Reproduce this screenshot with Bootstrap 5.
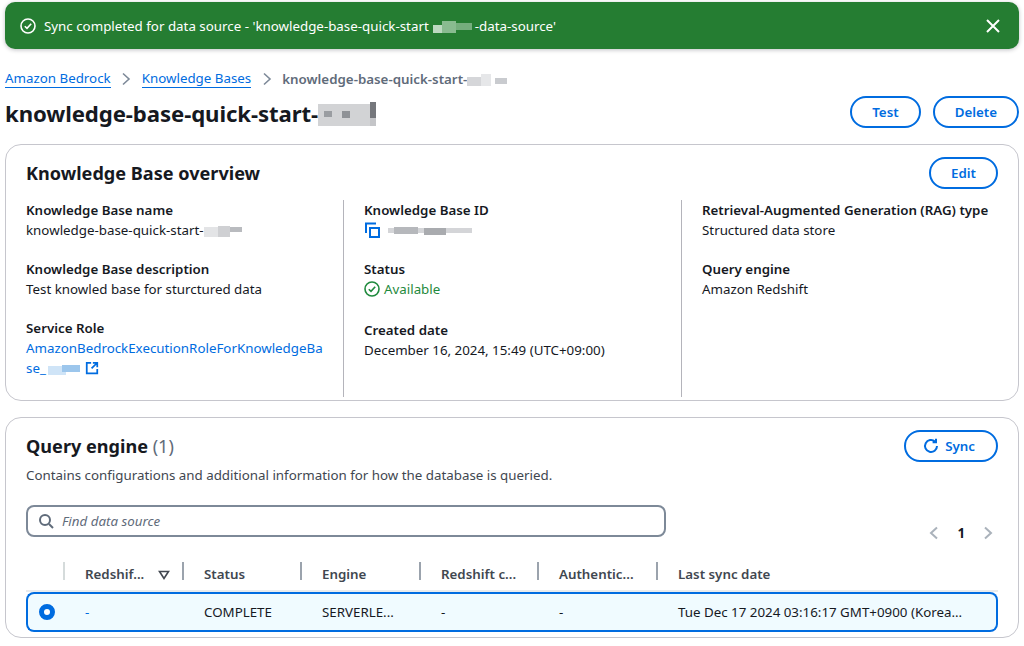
<!DOCTYPE html>
<html lang="en"><head><meta charset="utf-8"><title>Knowledge Base</title>
<link href="https://cdn.jsdelivr.net/npm/bootstrap@5.3.0/dist/css/bootstrap.min.css" rel="stylesheet">
<style>
html,body{height:646px;overflow:hidden}
body{font-family:"Noto Sans","Open Sans",sans-serif;font-size:13.33px;line-height:20px;color:#16191f;background:#fff}
.pg{padding:2px 5px 0}
.flash{height:47px;background:#257d32;color:#fff;border-radius:10px;padding:0 18px 0 15px;box-shadow:0 1px 4px rgba(0,7,22,.25);margin-bottom:20px}
.crumbs{height:20px;margin-bottom:4px}
.crumbs a,.lnk{color:#006ce0;text-decoration:none}
.crumbs a{border-bottom:1px solid #006ce0;line-height:17px;display:inline-block}
.crumb-sep{margin:0 10.5px}
.crumb-now{color:#5f6b7a;font-weight:600}
.titlebar{height:38px;margin-bottom:13px}
.ttl{font-size:22.2px;line-height:28px;font-weight:700;margin:0;padding-top:4px;letter-spacing:-.1px}
.pill{border:2px solid #006ce0;color:#006ce0;background:#fff;border-radius:16px;height:32px;font-size:13.33px;line-height:20px;font-weight:600;padding:0 20px;display:inline-flex;align-items:center;gap:6px}
.pill-ic{padding:0 21px 0 17px}
.panel{border:1px solid #c6c6cd;border-radius:16px;background:#fff;padding:12px 20px 0;position:relative}
.p1{height:257px;margin-bottom:16px}
.p2{height:221px}
.ph{font-size:18.1px;line-height:26px;font-weight:700;margin:3px 0 0}
.ph span{font-weight:400;color:#5f6b7a}
.ovg{display:grid;grid-template-columns:317px 338px 1fr;margin-top:11px;height:180px}
.ovc{padding-left:20px}
.ovc:first-child{padding-left:0;padding-right:16px}
.ovc+.ovc{border-left:1px solid #b4b4bb}
.fld{margin-bottom:19px}
.fld-tall{margin-bottom:21px}
.fl{font-weight:600;display:block}
.icv{min-height:20px}
.ok{color:#1f8a3d}
.desc{color:#414750;margin:3px 0 0}
.srchrow{margin-top:20px}
.srch{width:640px;height:32px;border:2px solid #7d8998;border-radius:8px;padding:0 10px;color:#5f6b7a;font-style:italic;gap:8px}
.pgr{color:#16191f;font-weight:700;gap:18px;padding-right:5px;margin-top:18px}
.tb{table-layout:fixed;width:972px;border-collapse:separate;border-spacing:0;margin:8px 0 0}
.tb th{font-weight:600;color:#414750;height:41px;padding:6px 0 0 21px;border:0;border-bottom:2px solid #e9ebed;position:relative;white-space:nowrap}
.tb th+th::before{content:"";position:absolute;left:-1px;top:11px;height:18px;width:2px;background:#9ba3ad}
.tb th:nth-child(2)::before{background:#d5dbdb}
.tb td{height:40px;padding:0 0 0 21px;background:#f0fbff;border:0;border-top:2px solid #006ce0;border-bottom:2px solid #006ce0;color:#16191f;white-space:nowrap;overflow:hidden;vertical-align:middle;--bs-table-bg:#f0fbff}
.tb td.lnk{color:#006ce0}
.tb td:first-child{border-left:2px solid #006ce0;border-radius:8px 0 0 8px;padding-left:11px}
.tb td:last-child{border-right:2px solid #006ce0;border-radius:0 8px 8px 0}
.rdo{display:block;width:16px;height:16px;border-radius:50%;border:5px solid #006ce0;background:#fff}
.mos{display:inline-block;vertical-align:-2px}
svg{flex:none}
</style></head>
<body>
<svg width="0" height="0" style="position:absolute"><filter id="bl"><feGaussianBlur stdDeviation=".7"/></filter></svg>
<div class="pg">
 <div class="flash d-flex align-items-center">
  <svg width="16" height="16" viewBox="0 0 16 16" fill="none" stroke="#fff" stroke-width="1.6" class="me-2"><circle cx="8" cy="8" r="7"/><path d="M4.8 8.2 7 10.4l4.2-4.6"/></svg>
  <span class="flex-grow-1">Sync completed for data source - 'knowledge-base-quick-start<svg class="mos" width="46" height="13"><g filter="url(#bl)"><rect x="4" y="5" width="9" height="8" fill="#bcd9c0"/><rect x="13" y="1" width="14" height="12" fill="#89bb90"/><rect x="27" y="3" width="16" height="7" fill="#75ae7d"/></g></svg>-data-source'</span>
  <svg width="16" height="16" viewBox="0 0 16 16" stroke="#fff" stroke-width="2" fill="none"><path d="M2 2l12 12M14 2 2 14"/></svg>
 </div>
 <div class="crumbs d-flex align-items-center">
  <a href="#">Amazon Bedrock</a>
  <svg class="crumb-sep" width="10" height="14" viewBox="0 0 10 14" fill="none" stroke="#7d8998" stroke-width="1.6"><path d="M2 1.5 8 7l-6 5.5"/></svg>
  <a href="#">Knowledge Bases</a>
  <svg class="crumb-sep" width="10" height="14" viewBox="0 0 10 14" fill="none" stroke="#7d8998" stroke-width="1.6"><path d="M2 1.5 8 7l-6 5.5"/></svg>
  <span class="crumb-now">knowledge-base-quick-start-<svg class="mos" width="42" height="12"><g filter="url(#bl)"><rect x="0" y="3" width="14" height="9" fill="#d5d6d9"/><rect x="14" y="0" width="10" height="12" fill="#e6e7e9"/><rect x="28" y="4" width="12" height="6" fill="#c9cbcf"/></g></svg></span>
 </div>
 <div class="titlebar d-flex align-items-center justify-content-between">
  <h1 class="ttl">knowledge-base-quick-start-<svg class="mos" width="60" height="24" style="vertical-align:-4px"><g filter="url(#bl)"><rect x="0" y="2" width="54" height="22" fill="#d2d3d5"/><rect x="6" y="9" width="8" height="6" fill="#9a9da1"/><rect x="24" y="9" width="8" height="7" fill="#8f9296"/><rect x="52" y="0" width="6" height="16" fill="#74777c"/><rect x="52" y="16" width="6" height="8" fill="#c4c5c8"/></g></svg></h1>
  <div class="d-flex gap-2 align-items-center"><button class="pill" type="button">Test</button><button class="pill ms-1" type="button">Delete</button></div>
 </div>
 <section class="panel p1">
  <div class="d-flex justify-content-between align-items-start">
   <h2 class="ph">Knowledge Base overview</h2>
   <button class="pill" type="button">Edit</button>
  </div>
  <div class="ovg">
   <div class="ovc">
    <div class="fld"><span class="fl">Knowledge Base name</span>knowledge-base-quick-start-<svg class="mos" width="40" height="12"><g filter="url(#bl)"><rect y="2" width="14" height="10" fill="#e3e4e6"/><rect x="14" y="1" width="12" height="11" fill="#cfd0d3"/><rect x="26" y="2" width="12" height="5" fill="#b9bbbf"/></g></svg></div>
    <div class="fld"><span class="fl">Knowledge Base description</span>Test knowled base for sturctured data</div>
    <div class="fld"><span class="fl">Service Role</span><a href="#" class="lnk text-break">AmazonBedrockExecutionRoleForKnowledgeBase_<svg class="mos" width="36" height="12"><g filter="url(#bl)"><rect x="2" y="3" width="18" height="9" fill="#cfe4f7"/><rect x="16" y="2" width="18" height="7" fill="#9cc6ec"/></g></svg></a>
     <svg width="14" height="14" viewBox="0 0 16 16" fill="none" stroke="#006ce0" stroke-width="2" style="vertical-align:-2px"><path d="M7 2H2v12h12V9M9 2h5v5M14 2 7.5 8.5"/></svg></div>
   </div>
   <div class="ovc">
    <div class="fld"><span class="fl">Knowledge Base ID</span><span class="icv d-flex align-items-center gap-2">
     <svg width="16" height="16" viewBox="0 0 16 16" fill="none" stroke="#006ce0" stroke-width="2"><path d="M2 11V1.5h10"/><rect x="6" y="6" width="9" height="9"/></svg>
     <svg width="84" height="12"><g filter="url(#bl)"><rect y="4" width="84" height="5" fill="#d4d5d8"/><rect x="6" y="3" width="24" height="7" fill="#b6b8bc"/><rect x="36" y="4" width="22" height="7" fill="#a9abaf"/></g></svg></span></div>
    <div class="fld fld-tall"><span class="fl">Status</span><span class="icv d-flex align-items-center gap-1 ok"><svg width="16" height="16" viewBox="0 0 16 16" fill="none" stroke="#1f8a3d" stroke-width="1.6"><circle cx="8" cy="8" r="7"/><path d="M4.8 8.2 7 10.4l4.2-4.6"/></svg>Available</span></div>
    <div class="fld"><span class="fl">Created date</span>December 16, 2024, 15:49 (UTC+09:00)</div>
   </div>
   <div class="ovc">
    <div class="fld"><span class="fl">Retrieval-Augmented Generation (RAG) type</span>Structured data store</div>
    <div class="fld"><span class="fl">Query engine</span>Amazon Redshift</div>
   </div>
  </div>
 </section>
 <section class="panel p2">
  <div class="d-flex justify-content-between align-items-start">
   <h2 class="ph">Query engine <span>(1)</span></h2>
   <button class="pill pill-ic" type="button"><svg width="16" height="16" viewBox="0 0 16 16" fill="none" stroke="#006ce0" stroke-width="2"><path d="M14 8a6 6 0 1 1-2-4.5M13 .8V4.2H9.6"/></svg>Sync</button>
  </div>
  <p class="desc">Contains configurations and additional information for how the database is queried.</p>
  <div class="srchrow d-flex justify-content-between align-items-start">
   <div class="srch d-flex align-items-center"><svg width="16" height="16" viewBox="0 0 16 16" fill="none" stroke="#5f6b7a" stroke-width="2"><circle cx="7" cy="7" r="5"/><path d="M11 11l4 4"/></svg>Find data source</div>
   <div class="pgr d-flex align-items-center">
    <svg width="10" height="14" viewBox="0 0 10 14" fill="none" stroke="#aab2bb" stroke-width="2"><path d="M8 1.5 2 7l6 5.5"/></svg>1<svg width="10" height="14" viewBox="0 0 10 14" fill="none" stroke="#aab2bb" stroke-width="2"><path d="M2 1.5 8 7l-6 5.5"/></svg>
   </div>
  </div>
  <table class="tb">
   <colgroup><col style="width:38px"><col style="width:119px"><col style="width:118px"><col style="width:119px"><col style="width:118px"><col style="width:119px"><col></colgroup>
   <thead><tr><th></th><th>Redshif...<svg width="12" height="10" viewBox="0 0 12 10" fill="none" stroke="#414750" stroke-width="1.6" style="margin-left:14px"><path d="M1.5 1.5h9L6 8.5z"/></svg></th><th>Status</th><th>Engine</th><th>Redshift c...</th><th>Authentic...</th><th>Last sync date</th></tr></thead>
   <tbody><tr><td><span class="rdo"></span></td><td class="lnk">-</td><td>COMPLETE</td><td>SERVERLE...</td><td>-</td><td>-</td><td>Tue Dec 17 2024 03:16:17 GMT+0900 (Korea...</td></tr></tbody>
  </table>
 </section>
</div>
</body></html>
